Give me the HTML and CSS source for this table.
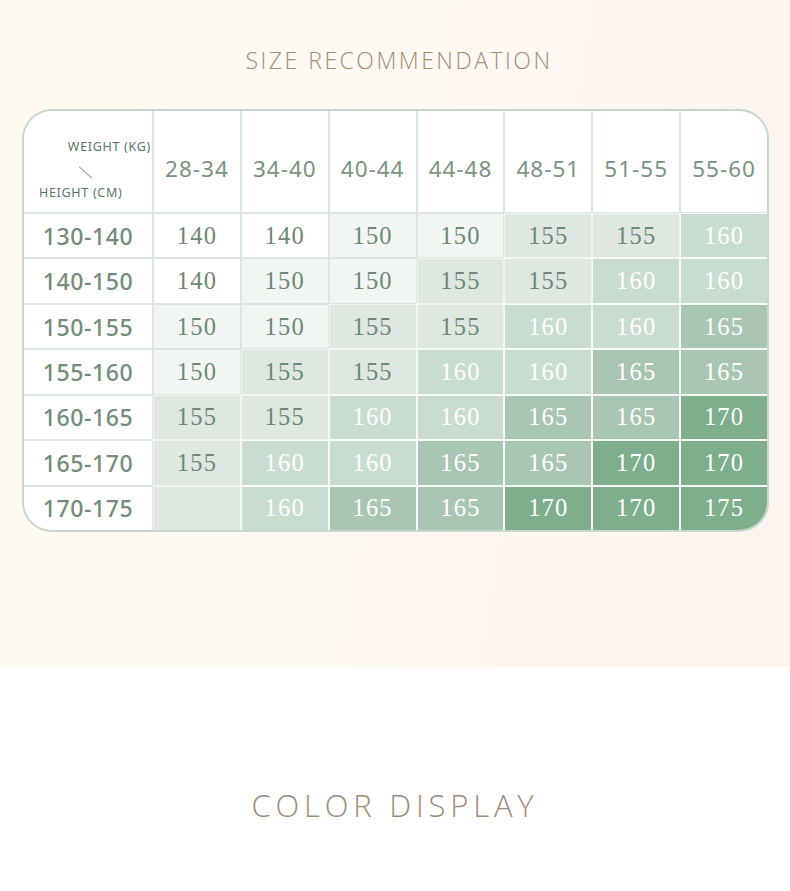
FILE: index.html
```html
<!DOCTYPE html>
<html>
<head>
<meta charset="utf-8">
<link rel="stylesheet" href="styles.css">
</head>
<body>
<section class="size-section">
  <h2 class="title">SIZE RECOMMENDATION</h2>
  <div class="chart">
    <div class="grid">
      <div class="corner">
        <span class="lbl-w">WEIGHT (KG)</span>
        <span class="slash"></span>
        <span class="lbl-h">HEIGHT (CM)</span>
      </div>
      <div class="hd">28-34</div><div class="hd">34-40</div><div class="hd">40-44</div><div class="hd">44-48</div><div class="hd">48-51</div><div class="hd">51-55</div><div class="hd">55-60</div>

      <div class="rl">130-140</div>
      <div class="c c0">140</div><div class="c c0">140</div><div class="c c1">150</div><div class="c c1">150</div><div class="c c2">155</div><div class="c c2">155</div><div class="c c3">160</div>

      <div class="rl">140-150</div>
      <div class="c c0">140</div><div class="c c1">150</div><div class="c c1">150</div><div class="c c2">155</div><div class="c c2">155</div><div class="c c3">160</div><div class="c c3">160</div>

      <div class="rl">150-155</div>
      <div class="c c1">150</div><div class="c c1">150</div><div class="c c2">155</div><div class="c c2">155</div><div class="c c3">160</div><div class="c c3">160</div><div class="c c4">165</div>

      <div class="rl">155-160</div>
      <div class="c c1">150</div><div class="c c2">155</div><div class="c c2">155</div><div class="c c3">160</div><div class="c c3">160</div><div class="c c4">165</div><div class="c c4">165</div>

      <div class="rl">160-165</div>
      <div class="c c2">155</div><div class="c c2">155</div><div class="c c3">160</div><div class="c c3">160</div><div class="c c4">165</div><div class="c c4">165</div><div class="c c5">170</div>

      <div class="rl">165-170</div>
      <div class="c c2">155</div><div class="c c3">160</div><div class="c c3">160</div><div class="c c4">165</div><div class="c c4">165</div><div class="c c5">170</div><div class="c c5">170</div>

      <div class="rl">170-175</div>
      <div class="c c2"></div><div class="c c3">160</div><div class="c c4">165</div><div class="c c4">165</div><div class="c c5">170</div><div class="c c5">170</div><div class="c c5">175</div>
    </div>
  </div>
</section>
<section class="color-section">
  <h2 class="title2">COLOR DISPLAY</h2>
</section>
</body>
</html>
```
FILE: styles.css
```css
html, body {
  margin: 0;
  padding: 0;
  background: #ffffff;
}
body {
  width: 790px;
  font-family: "Noto Sans", "Open Sans", sans-serif;
}
.size-section {
  height: 667px;
  box-sizing: border-box;
  padding-top: 46px;
  background: linear-gradient(100deg, #fdfbf0 0%, #fdf8f1 50%, #fdf3ef 100%);
}
.title {
  margin: 0;
  padding-left: 8px;
  text-align: center;
  font-family: "Open Sans", "Noto Sans", sans-serif;
  font-weight: 300;
  font-size: 23px;
  line-height: 28px;
  letter-spacing: 2.5px;
  color: #9f8c78;
}
.chart {
  margin: 35px 0 0 22px;
  width: 747px;
  box-sizing: border-box;
  border: 2px solid #c7d7ce;
  border-radius: 30px;
  overflow: hidden;
  background: #dbe6e0;
}
.grid {
  display: grid;
  grid-template-columns: 128px repeat(7, 1fr);
  grid-template-rows: 101px repeat(7, 1fr);
  gap: 2px;
  height: 419px;
}
.corner {
  background: #fff;
  display: flex;
  flex-direction: column;
  padding-top: 28px;
  font-size: 12.5px;
  letter-spacing: 0.7px;
  color: #5a7565;
}
.lbl-w {
  align-self: flex-end;
  margin-right: 1px;
  line-height: 16px;
}
.slash {
  width: 17px;
  height: 1.2px;
  background: #8aa092;
  margin: 17px 0 0 53px;
  transform: rotate(42deg);
}
.lbl-h {
  align-self: flex-start;
  margin: 12px 0 0 15px;
  line-height: 16px;
}
.hd {
  background: #fff;
  display: flex;
  align-items: center;
  justify-content: center;
  padding-top: 14px;
  font-size: 22.5px;
  letter-spacing: 1px;
  color: #7b9484;
}
.rl {
  background: #fff;
  display: flex;
  align-items: center;
  justify-content: center;
  font-size: 23px;
  font-weight: 500;
  letter-spacing: 0.6px;
  color: #738c7c;
}
.c {
  display: flex;
  align-items: center;
  justify-content: center;
  font-family: "Liberation Serif", "Times New Roman", serif;
  font-size: 24.5px;
  letter-spacing: 1.2px;
  color: #6d8876;
}
.c0 { background: #ffffff; }
.c1 { background: #f1f6f2; }
.c2 { background: #dee8e1; box-shadow: 0 0 0 1px rgba(255,255,255,0.6); }
.c3 { background: #c9dcd0; color: #ffffff; box-shadow: 0 0 0 1px rgba(255,255,255,0.8); }
.c4 { background: #a8c6b1; color: #ffffff; box-shadow: 0 0 0 1px rgba(255,255,255,0.8); }
.c5 { background: #7eae8c; color: #ffffff; box-shadow: 0 0 0 1px rgba(255,255,255,0.8); }
.color-section {
  height: 224px;
  box-sizing: border-box;
  padding-top: 119px;
  background: #ffffff;
}
.title2 {
  margin: 0;
  text-align: center;
  font-family: "Open Sans", "Noto Sans", sans-serif;
  font-weight: 300;
  font-size: 31px;
  line-height: 38px;
  letter-spacing: 4.8px;
  color: #9f8c78;
}
```
